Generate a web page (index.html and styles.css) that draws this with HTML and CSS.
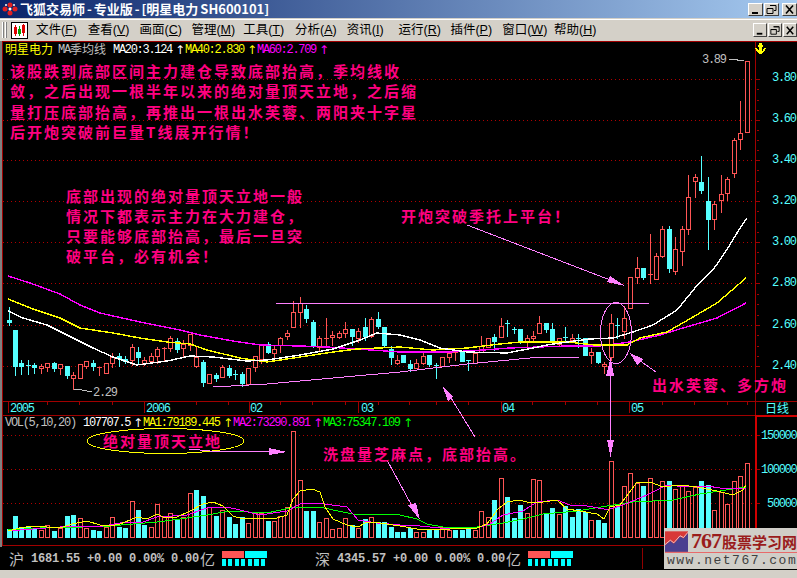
FILE: index.html
```html
<!DOCTYPE html>
<html lang="zh-CN">
<head>
	<meta charset="UTF-8">
	<title>飞狐交易师 - 专业版</title>
	<link rel="stylesheet" href="styles.css">
</head>
<body>
	<div class="app">
		<div class="titlebar">
			<svg class="applogo" width="16" height="14" viewBox="0 0 16 14">
				<circle cx="3" cy="7" r="2.5" fill="#e02020"/>
				<circle cx="8" cy="3" r="2.5" fill="#e02020"/>
				<circle cx="13" cy="7" r="2.5" fill="#e02020"/>
				<circle cx="8" cy="11" r="2.5" fill="#e02020"/>
				<circle cx="8" cy="7" r="1.5" fill="#fff"/>
				<circle cx="4" cy="3" r="1" fill="#fff"/>
				<circle cx="12" cy="3" r="1" fill="#fff"/>
			</svg>
			<span class="titletext">飞狐交易师 - 专业版 - [明星电力 SH600101]</span>
			<div class="winbtns">
				<span class="winbtn"><svg width="13" height="11" viewBox="0 0 13 11"><rect x="3" y="8" width="6" height="2"/></svg></span>
				<span class="winbtn"><svg width="13" height="11" viewBox="0 0 13 11"><path d="M5 1.5h6v5h-2M2 4.5h6v5H2z" fill="none" stroke="#000" stroke-width="1"/><path d="M5 1h6v1H5zM2 4h6v1H2z"/></svg></span>
				<span class="winbtn gap"><svg width="13" height="11" viewBox="0 0 13 11"><path d="M3 1.5l7 8M10 1.5l-7 8" stroke="#000" stroke-width="1.6"/></svg></span>
			</div>
		</div>

		<div class="menubar">
			<span class="grip"></span>
			<span class="grip"></span>
			<svg class="toolicon" width="17" height="17" viewBox="0 0 17 17">
				<rect x="0.5" y="0.5" width="16" height="16" fill="#fff" stroke="#000"/>
				<rect x="3" y="5" width="3" height="7" fill="#e00000"/>
				<path d="M4.5 3v11" stroke="#e00000"/>
				<rect x="7" y="7" width="3" height="5" fill="#00a000"/>
				<path d="M8.5 4v10" stroke="#00a000"/>
				<rect x="11" y="3" width="3" height="8" fill="#e00000"/>
				<path d="M12.5 2v12" stroke="#e00000"/>
			</svg>
			<ul class="menu">
				<li>文件(<u>F</u>)</li>
				<li>查看(<u>V</u>)</li>
				<li>画面(<u>C</u>)</li>
				<li>管理(<u>M</u>)</li>
				<li>工具(<u>T</u>)</li>
				<li>分析(<u>A</u>)</li>
				<li>资讯(<u>I</u>)</li>
				<li>运行(<u>R</u>)</li>
				<li>插件(<u>P</u>)</li>
				<li>窗口(<u>W</u>)</li>
				<li>帮助(<u>H</u>)</li>
			</ul>
			<div class="winbtns inner">
				<span class="winbtn"><svg width="13" height="11" viewBox="0 0 13 11"><rect x="3" y="8" width="6" height="2"/></svg></span>
				<span class="winbtn"><svg width="13" height="11" viewBox="0 0 13 11"><path d="M5 1.5h6v5h-2M2 4.5h6v5H2z" fill="none" stroke="#000" stroke-width="1"/><path d="M5 1h6v1H5zM2 4h6v1H2z"/></svg></span>
				<span class="winbtn"><svg width="13" height="11" viewBox="0 0 13 11"><path d="M3 1.5l7 8M10 1.5l-7 8" stroke="#000" stroke-width="1.6"/></svg></span>
			</div>
		</div>

		<svg class="chart" id="chart" width="797" height="506" viewBox="0 41 797 506">
			<rect class="paper" x="2" y="41" width="795" height="506"/>
			<g id="grid"></g>
			<g id="candles"></g>
			<g id="vols"></g>
			<g id="lines"></g>

			<!-- price panel header -->
			<text class="cn yellow" x="5" y="54">明星电力</text>
			<text class="mono gray" x="58" y="53">MA</text>
			<text class="cn gray" x="70" y="54">季均线</text>
			<text class="mono white" x="113" y="53">MA20:3.124</text>
			<text class="up white" x="175" y="54">↑</text>
			<text class="mono yellow" x="185" y="53">MA40:2.830</text>
			<text class="up yellow" x="247" y="54">↑</text>
			<text class="mono magenta" x="257" y="53">MA60:2.709</text>
			<text class="up magenta" x="319" y="54">↑</text>

			<path class="anchor" d="M759 43h3v2h1v2h-1v4l1-1 1-2h2l-2 4-3 2h-1l-3-2-2-4h2l1 2 1 1v-4h-1v-2h1z"/>

			<!-- price axis labels -->
			<text class="mono cyan" x="772" y="81">3.80</text>
			<text class="mono cyan" x="772" y="122">3.60</text>
			<text class="mono cyan" x="772" y="163">3.40</text>
			<text class="mono cyan" x="772" y="204">3.20</text>
			<text class="mono cyan" x="772" y="245">3.00</text>
			<text class="mono cyan" x="772" y="286">2.80</text>
			<text class="mono cyan" x="772" y="328">2.60</text>
			<text class="mono cyan" x="772" y="369">2.40</text>

			<text class="mono gray" x="702" y="63">3.89</text>
			<polyline class="tail" points="729,59 737,59 737,60 744,60"/>
			<text class="mono gray" x="93" y="396">2.29</text>
			<polyline class="tail" points="74,389 82,390 92,392"/>

			<!-- time axis labels -->
			<text class="mono cyan" x="10" y="412">2005</text>
			<text class="mono cyan" x="146" y="412">2006</text>
			<text class="mono cyan" x="250" y="412">02</text>
			<text class="mono cyan" x="361" y="412">03</text>
			<text class="mono cyan" x="502" y="412">04</text>
			<text class="mono cyan" x="631" y="412">05</text>
			<text class="cn cyan" x="765" y="413">日线</text>

			<!-- volume panel header and axis -->
			<text class="mono gray" x="5" y="426">VOL(5,10,20)</text>
			<text class="mono white" x="83" y="426">107707.5</text>
			<text class="up white" x="133" y="427">↑</text>
			<text class="mono yellow" x="143" y="426">MA1:79189.445</text>
			<text class="up yellow" x="223" y="427">↑</text>
			<text class="mono magenta" x="233" y="426">MA2:73290.891</text>
			<text class="up magenta" x="313" y="427">↑</text>
			<text class="mono lime" x="323" y="426">MA3:75347.109</text>
			<text class="up lime" x="403" y="427">↑</text>
			<text class="mono cyan" x="761" y="439">150000</text>
			<text class="mono cyan" x="761" y="473">100000</text>
			<text class="mono cyan" x="767" y="507">50000</text>

			<!-- hand drawn trend lines and arrows -->
			<line class="pen" x1="276" y1="303" x2="649" y2="303"/>
			<polyline class="pen" points="213,387 267,384 333,378 400,372 467,364 530,358 580,357"/>
			<ellipse class="ring" cx="616" cy="333" rx="15.5" ry="30.5"/>
			<ellipse class="ring yellowring" cx="165.5" cy="441" rx="78.5" ry="12.5"/>

			<line class="pen" x1="467" y1="225" x2="618" y2="283"/>
			<polygon class="head" points="625,286 610,276 607,282"/>
			<line class="pen" x1="656" y1="372" x2="636" y2="358"/>
			<polygon class="head" points="630,353 643,359 637,365"/>
			<line class="pen" x1="475" y1="437" x2="448" y2="393"/>
			<polygon class="head" points="442,385 453,397 448,401"/>
			<line class="pen" x1="387" y1="460" x2="412" y2="506"/>
			<polygon class="head" points="420,520 408,505 416,503"/>
			<polyline class="pen" points="189,449 210,451 269,451"/>
			<polygon class="head" points="269,448 269,455 287,452"/>
			<line class="pen" x1="610.5" y1="370" x2="610.5" y2="445"/>
			<polygon class="head" points="610.5,358 606,376 614,376"/>
			<polygon class="head" points="607,440 614,440 610.5,457"/>

			<!-- notes written on the chart -->
			<text class="note" x="10" y="77">该股跌到底部区间主力建仓导致底部抬高，季均线收</text>
			<text class="note" x="10" y="97">敛，之后出现一根半年以来的绝对量顶天立地，之后缩</text>
			<text class="note" x="10" y="118">量打压底部抬高，再推出一根出水芙蓉、两阳夹十字星</text>
			<text class="note" x="10" y="138">后开炮突破前巨量T线展开行情！</text>
			<text class="note" x="66" y="202">底部出现的绝对量顶天立地一般</text>
			<text class="note" x="66" y="222">情况下都表示主力在大力建仓，</text>
			<text class="note" x="66" y="242">只要能够底部抬高，最后一旦突</text>
			<text class="note" x="66" y="262">破平台，必有机会！</text>
			<text class="note" x="401" y="222">开炮突破季托上平台！</text>
			<text class="note" x="652" y="391">出水芙蓉、多方炮</text>
			<text class="note" x="103" y="447">绝对量顶天立地</text>
			<text class="note" x="323" y="460">洗盘量芝麻点，底部抬高。</text>
		</svg>

		<div class="statusbar">
			<div class="index">
				<span class="market">沪</span>
				<span class="quote">1681.55 +0.00 0.00% 0.00</span>
				<span class="market unit">亿</span>
				<div class="meter"><i class="rise"></i><i class="fall"></i><b class="teeth"></b></div>
			</div>
			<div class="index">
				<span class="market">深</span>
				<span class="quote">4345.57 +0.00 0.00% 0.00</span>
				<span class="market unit">亿</span>
				<div class="meter"><i class="rise"></i><i class="fall"></i><b class="teeth"></b></div>
			</div>
			<span class="cell"></span>
			<span class="cell"></span>
			<span class="cell"></span>
		</div>

		<div class="watermark">
			<div class="markrow">
				<svg width="26" height="23" viewBox="0 0 26 23">
					<rect width="26" height="23" fill="#d83838"/>
					<polygon points="0,23 0,16 6,11 10,14 17,6 21,8 26,2 26,23" fill="#4a3f90"/>
					<polyline points="0,15 6,10 10,13 17,5 21,7 26,1" fill="none" stroke="#f0d0d0"/>
				</svg>
				<span class="marknum">767</span><span class="markname">股票学习网</span>
			</div>
			<div class="markurl">www.net767.com</div>
		</div>
	</div>
	<script src="chart.js"></script>
</body>
</html>
```

FILE: styles.css
```css
* {
	margin: 0;
	padding: 0;
	box-sizing: border-box;
}
html, body {
	background: #d4d0c8;
}
body {
	width: 797px;
	height: 578px;
	overflow: hidden;
	font-family: "Liberation Sans", "Noto Sans CJK SC", sans-serif;
}
.app {
	position: relative;
	width: 797px;
	height: 578px;
}
.titlebar {
	display: flex;
	align-items: center;
	height: 18px;
	padding-left: 2px;
	background: linear-gradient(to right, #0a246a, #a6caf0);
	color: #fff;
}
.applogo {
	flex: none;
}
.titletext {
	margin-left: 2px;
	font-size: 13px;
	font-weight: bold;
	font-family: "Noto Sans CJK SC", sans-serif;
	line-height: 18px;
	word-spacing: -1px;
	white-space: pre;
}
.winbtns {
	display: flex;
	gap: 1px;
	margin-left: auto;
}
.winbtn {
	display: flex;
	align-items: center;
	justify-content: center;
	width: 15px;
	height: 13px;
	background: #d4d0c8;
	border: 1px solid;
	border-color: #fff #404040 #404040 #fff;
}
.winbtn.gap {
	margin-left: 2px;
}
.menubar {
	display: flex;
	align-items: center;
	height: 21px;
	margin-top: 1px;
	padding-left: 2px;
	border-top: 1px solid #fff;
	background: #d4d0c8;
}
.grip {
	width: 2px;
	height: 16px;
	margin-right: 1px;
	background: #808080;
	border-left: 1px solid #fff;
}
.toolicon {
	flex: none;
	margin-left: 3px;
}
.menu {
	display: flex;
	margin-left: 8px;
	list-style: none;
	font-size: 12.5px;
	line-height: 18px;
	color: #000;
}
.menu li {
	width: 51.8px;
	white-space: nowrap;
}
.winbtns.inner {
	gap: 1px;
}
.winbtns.inner .winbtn {
	width: 14px;
	height: 14px;
}
.chart {
	display: block;
	margin-top: 1px;
	background: #808080;
	shape-rendering: crispEdges;
}
.paper {
	fill: #000;
}
.dots {
	stroke: #b00000;
	stroke-dasharray: 1 3;
}
.rule {
	stroke: #a00000;
}
.rule.hot {
	stroke: #d00000;
	stroke-width: 2;
}
.upc {
	fill: #000;
	stroke: #ff5555;
}
.upw {
	stroke: #ff5555;
}
.dnc {
	fill: #55ffff;
}
.dnw {
	stroke: #55ffff;
}
polyline.ma {
	fill: none;
	stroke-width: 1.4;
}
polyline.ma.thin {
	stroke-width: 1;
}
.ma.white {
	stroke: #fff;
}
.ma.yellow {
	stroke: #ffff00;
}
.ma.magenta {
	stroke: #ff00ff;
}
.ma.lime {
	stroke: #00ff00;
}
text {
	white-space: pre;
}
.mono {
	font-family: "Liberation Mono", monospace;
	font-size: 12px;
	letter-spacing: -1.3px;
}
.cn {
	font-family: "Noto Sans CJK SC", sans-serif;
	font-size: 12px;
}
.up {
	font-family: "DejaVu Sans", sans-serif;
	font-size: 12px;
}
.gray {
	fill: #c0c0c0;
}
.white {
	fill: #fff;
}
.yellow {
	fill: #ffff00;
}
.magenta {
	fill: #ff00ff;
}
.lime {
	fill: #00ff00;
}
.cyan {
	fill: #55ffff;
}
.anchor {
	fill: #ffff00;
}
.tail {
	fill: none;
	stroke: #c0c0c0;
}
.pen {
	fill: none;
	stroke: #ff80ff;
}
.ring {
	fill: none;
	stroke: #ff80ff;
}
.yellowring {
	stroke: #ffff00;
}
.head {
	fill: #ff80ff;
}
.note {
	fill: #ff0080;
	font-family: "Noto Sans CJK SC", sans-serif;
	font-size: 15px;
	font-weight: bold;
	letter-spacing: 2px;
}
.statusbar {
	display: flex;
	align-items: center;
	height: 23px;
	padding-left: 9px;
	background: #000;
	color: #c0c0c0;
}
.index {
	display: flex;
	align-items: center;
	flex: none;
	width: 306px;
}
.market {
	font-family: "Noto Sans CJK SC", sans-serif;
	font-size: 15px;
	line-height: 23px;
}
.quote {
	margin-left: 7px;
	font-family: "Liberation Mono", monospace;
	font-size: 12px;
	font-weight: bold;
	letter-spacing: -0.2px;
	white-space: pre;
}
.unit {
	margin-left: 1px;
}
.meter {
	display: grid;
	grid-template-columns: 22px 22px;
	grid-template-rows: 7px 7px;
	column-gap: 1px;
	row-gap: 1px;
	margin-left: 7px;
}
.rise {
	background: #ff5555;
}
.fall {
	background: #00ffff;
}
.teeth {
	grid-column: 1 / 3;
	background: repeating-linear-gradient(to right, #00ffff 0, #00ffff 4px, #000 4px, #000 6.5px);
}
.cell {
	flex: none;
	width: 22.5px;
	height: 21px;
	border-right: 1px solid #900000;
}
.cell:first-of-type {
	margin-left: -1px;
}
.watermark {
	position: absolute;
	right: 0;
	top: 528px;
	width: 133px;
	height: 41px;
	padding: 2px 0 0 1px;
	background: #d0cec8;
	overflow: hidden;
}
.markrow {
	display: flex;
	align-items: center;
	height: 23px;
	border-bottom: 1px solid #e86a6a;
	white-space: nowrap;
	color: #9a1c1c;
}
.marknum {
	margin-left: 3px;
	font-family: "Liberation Serif", serif;
	font-size: 22px;
	font-weight: bold;
	letter-spacing: -1px;
}
.markname {
	margin-left: 1px;
	font-family: "Noto Sans CJK SC", sans-serif;
	font-size: 15px;
	font-weight: bold;
}
.markurl {
	margin-left: 2px;
	font-family: "Liberation Mono", monospace;
	font-size: 13px;
	line-height: 15px;
	letter-spacing: 1.5px;
	color: #404040;
}
```

FILE: chart.js
```js
var SVGNS = 'http://www.w3.org/2000/svg';
var GRID = document.getElementById('grid'),
    CANDLES = document.getElementById('candles'),
    VOLS = document.getElementById('vols'),
    LINES = document.getElementById('lines');

// kind (1 up, 0 down), body top, body bottom, high, low. All are page pixels
var bars = [
	[0,320,322,307,325],[0,330,366,330,375],[0,363,366,360,374],[0,365,366,360,374],[0,365,367,363,373],
	[1,366,368,364,373],[1,363,367,363,371],[0,363,368,362,371],[1,364,368,364,374],[0,366,375,366,378],
	[1,375,378,372,389],[1,364,378,364,378],[1,361,366,361,368],[0,363,366,360,370],[1,367,368,367,375],
	[1,363,373,363,373],[1,357,363,353,367],[0,356,358,353,366],[0,359,361,356,363],[1,347,360,344,365],
	[0,352,357,347,363],[1,360,363,357,365],[1,356,361,353,363],[1,349,356,347,363],[1,348,349,347,360],
	[1,338,348,336,351],[0,341,349,338,352],[1,344,348,340,356],[1,334,345,334,350],[1,357,366,347,367],
	[0,362,382,360,386],[1,374,383,374,383],[0,375,378,373,381],[1,367,377,365,377],[0,368,375,365,377],
	[0,374,375,370,379],[0,374,383,372,386],[1,368,384,368,384],[1,356,367,356,371],[1,345,359,345,363],
	[0,344,352,342,353],[1,349,353,345,357],[1,338,345,337,352],[1,333,336,330,339],[1,312,327,301,327],
	[1,303,312,297,327],[0,309,318,305,322],[0,322,345,320,347],[1,338,347,336,351],[1,338,338,318,347],
	[1,335,337,331,345],[1,333,337,331,338],[1,329,333,322,337],[0,329,336,329,345],[1,331,338,328,342],
	[0,327,336,318,340],[1,319,336,317,337],[0,319,326,312,328],[0,327,345,327,347],[0,349,357,346,364],
	[1,360,363,355,364],[0,355,362,355,362],[0,364,368,360,371],[1,363,368,359,368],[1,356,363,353,364],
	[0,355,364,355,366],[0,365,366,363,378],[1,357,366,357,366],[1,353,357,352,362],[1,352,353,351,360],
	[0,352,361,351,361],[0,360,361,360,370],[1,353,363,353,363],[1,346,352,336,352],[1,338,347,338,347],
	[0,337,341,334,350],[1,326,337,318,337],[0,323,324,320,336],[0,329,330,327,333],[0,329,341,329,343],
	[1,338,342,335,348],[1,336,338,331,340],[1,323,333,316,333],[0,323,329,323,332],[0,329,341,323,344],
	[1,338,344,338,345],[0,337,338,327,341],[1,338,340,334,341],[0,338,339,334,347],[0,338,355,338,355],
	[1,352,355,348,363],[0,352,362,352,363],[1,364,366,362,373],[1,323,357,314,360],[0,325,326,318,338],
	[1,318,331,306,338],[1,277,308,277,308],[1,268,277,257,283],[0,268,277,268,279],[1,274,275,234,283],
	[1,256,279,253,279],[1,229,256,226,257],[0,229,268,226,272],[1,249,271,237,274],[1,229,251,226,265],
	[1,197,229,175,234],[1,177,181,174,197],[0,182,190,156,193],[0,201,219,177,249],[1,204,219,201,229],
	[1,194,200,175,212],[1,179,193,177,200],[1,140,173,138,177],[1,133,139,101,149],[1,61,132,61,132]
];

// top of each volume bar, minus means a down day
var vols = [
	-529,-516,-527,-527,-529,530,525,-531,528,-516,-515,518,528,-530,-531,527,517,-527,-528,501,
	-510,-525,527,504,517,513,-519,517,493,-490,-496,507,-516,510,-517,-524,-517,523,513,513,
	-521,521,516,507,431,480,-511,-511,522,518,529,528,518,-525,528,-519,517,-522,-522,-527,
	-532,-532,-528,532,532,-530,-530,527,530,-530,-530,-529,530,511,517,-500,478,-497,-518,-505,
	513,479,480,-513,-508,514,-506,-517,-509,-512,520,-520,-523,461,-507,486,473,483,-486,478,
	500,481,-481,489,486,491,487,-481,-485,510,492,504,481,476,463
];

var maWhite = '8,311 23,318 47,325 67,335 93,348 113,357 137,365 167,361 190,356 213,357 247,361 267,360 300,355 333,349 360,340 377,333 400,335 420,340 440,348 467,352 507,353 533,348 547,345 567,342 590,339 613,338 633,332 653,325 677,310 695,288 715,267 728,248 737,233 747,218';
var maYellow = '8,299 33,309 60,318 80,328 113,333 140,338 167,342 190,344 207,350 240,358 267,362 300,357 333,352 357,349 400,347 433,350 467,348 500,344 520,342 567,342 595,345 627,345 640,338 667,332 693,317 717,303 746,278';
var maMagenta = '8,276 30,283 60,294 80,305 100,313 140,322 180,330 200,335 233,341 260,345 300,346 327,347 400,352 450,352 483,350 510,348 567,346 600,346 630,342 660,335 683,328 717,318 746,303';

// volume averages, as x and the height above the zero line at y 537
var volYellow = [[8,6],[20,9],[33,11],[47,10],[60,9],[72,13],[87,16],[100,12],[110,11],[120,13],[130,17],[137,20],[147,18],[157,23],[163,20],[177,20],[190,26],[203,33],[213,35],[223,31],[233,21],[243,18],[260,19],[277,19],[287,22],[293,38],[300,46],[312,48],[320,45],[325,30],[333,18],[347,12],[358,10],[367,15],[380,14],[400,11],[417,8],[433,7],[450,8],[477,9],[487,13],[498,28],[507,35],[520,37],[530,34],[543,35],[557,37],[567,28],[580,26],[597,23],[604,18],[610,30],[620,32],[637,55],[650,55],[663,50],[680,52],[697,50],[717,46],[733,42],[743,47],[746,52]];
var volMagenta = [[8,6],[33,8],[60,10],[80,11],[103,11],[120,14],[143,15],[157,20],[187,22],[207,29],[227,30],[240,27],[260,22],[287,26],[300,33],[317,34],[347,30],[358,17],[377,14],[400,12],[420,11],[440,9],[477,9],[490,13],[503,22],[523,26],[537,35],[557,37],[570,32],[587,31],[604,28],[610,28],[623,32],[647,42],[667,52],[687,50],[707,51],[720,49],[746,49]];
var volLime = [[8,7],[40,9],[83,10],[110,11],[133,13],[157,15],[180,18],[207,22],[230,26],[267,24],[290,29],[320,30],[333,27],[353,23],[400,22],[417,18],[427,13],[443,10],[477,10],[503,14],[523,18],[543,23],[577,26],[607,31],[633,35],[673,37],[700,43],[720,46],[746,50]];

function make(parent, tag, attrs) {
	var el = document.createElementNS(SVGNS, tag);
	for (var k in attrs) {
		el.setAttribute(k, attrs[k]);
	}
	parent.appendChild(el);
	return el;
}

function rule(parent, x1, y1, x2, y2, cls) {
	make(parent, 'line', {x1: x1, y1: y1, x2: x2, y2: y2, 'class': cls});
}

function barX(i) {
	return Math.round(8.5 + 6.475 * i);
}

function drawGrid() {
	var prices = [79, 120, 160, 201, 242, 283, 325, 366],
	    volumes = [435, 469, 503],
	    shortTicks = [409, 436, 468, 532, 565, 597, 662, 694, 727, 747, 47, 79, 112, 196, 228, 280, 312, 345, 378],
	    longTicks = [8, 144, 249, 358, 501, 629],
	    i, j;

	for (i = 0; i < prices.length; i++) {
		rule(GRID, 3, prices[i] + 0.5, 755, prices[i] + 0.5, 'dots');
		rule(GRID, 755, prices[i] + 0.5, 760, prices[i] + 0.5, 'rule');
		if (i < prices.length - 1) {
			for (j = 1; j < 4; j++) {
				var y = Math.round(prices[i] + (prices[i + 1] - prices[i]) * j / 4) + 0.5;
				rule(GRID, 757, y, 759, y, 'rule');
			}
		}
	}
	for (i = 0; i < volumes.length; i++) {
		rule(GRID, 3, volumes[i] + 0.5, 755, volumes[i] + 0.5, 'dots');
		rule(GRID, 755, volumes[i] + 0.5, 760, volumes[i] + 0.5, 'rule');
	}
	for (i = 0; i < shortTicks.length; i++) {
		rule(GRID, shortTicks[i] + 0.5, 401, shortTicks[i] + 0.5, 405, 'rule');
	}
	for (i = 0; i < longTicks.length; i++) {
		rule(GRID, longTicks[i] + 0.5, 401, longTicks[i] + 0.5, 413, 'rule');
	}
	rule(GRID, 2.5, 41, 2.5, 546, 'rule');
	rule(GRID, 2, 41.5, 797, 41.5, 'rule');
	rule(GRID, 2, 401.5, 797, 401.5, 'rule');
	rule(GRID, 2, 415.5, 755, 415.5, 'rule');
	rule(GRID, 2, 545.5, 797, 545.5, 'rule');
	rule(GRID, 755.5, 41, 755.5, 415, 'rule');
	rule(GRID, 756, 415, 756, 546, 'rule hot');
	rule(GRID, 755, 416, 797, 416, 'rule hot');
}

function drawCandles() {
	for (var i = 0; i < bars.length; i++) {
		var b = bars[i], x = barX(i), up = b[0] === 1;
		rule(CANDLES, x + 0.5, b[3], x + 0.5, b[4] + 1, up ? 'upw' : 'dnw');
		if (b[2] - b[1] < 2) {
			rule(CANDLES, x - 2, b[1] + 0.5, x + 3, b[1] + 0.5, up ? 'upw' : 'dnw');
		} else if (up) {
			make(CANDLES, 'rect', {x: x - 1.5, y: b[1] + 0.5, width: 4, height: b[2] - b[1], 'class': 'upc'});
		} else {
			make(CANDLES, 'rect', {x: x - 2, y: b[1], width: 5, height: b[2] - b[1] + 1, 'class': 'dnc'});
		}
	}
}

function drawVols() {
	for (var i = 0; i < vols.length; i++) {
		var top = Math.abs(vols[i]), x = barX(i);
		if (vols[i] > 0) {
			make(VOLS, 'rect', {x: x - 1.5, y: top + 0.5, width: 4, height: 537 - top, 'class': 'upc'});
		} else {
			make(VOLS, 'rect', {x: x - 2, y: top, width: 5, height: 538 - top, 'class': 'dnc'});
		}
	}
}

function drawLine(points, cls) {
	make(LINES, 'polyline', {points: points, 'class': cls});
}

function volPoints(list) {
	return list.map(function (p) {
		return p[0] + ',' + (537 - p[1]);
	}).join(' ');
}

drawGrid();
drawCandles();
drawVols();
drawLine(maMagenta, 'ma magenta');
drawLine(maYellow, 'ma yellow');
drawLine(maWhite, 'ma white');
drawLine(volPoints(volLime), 'ma thin lime');
drawLine(volPoints(volMagenta), 'ma thin magenta');
drawLine(volPoints(volYellow), 'ma thin yellow');
```
